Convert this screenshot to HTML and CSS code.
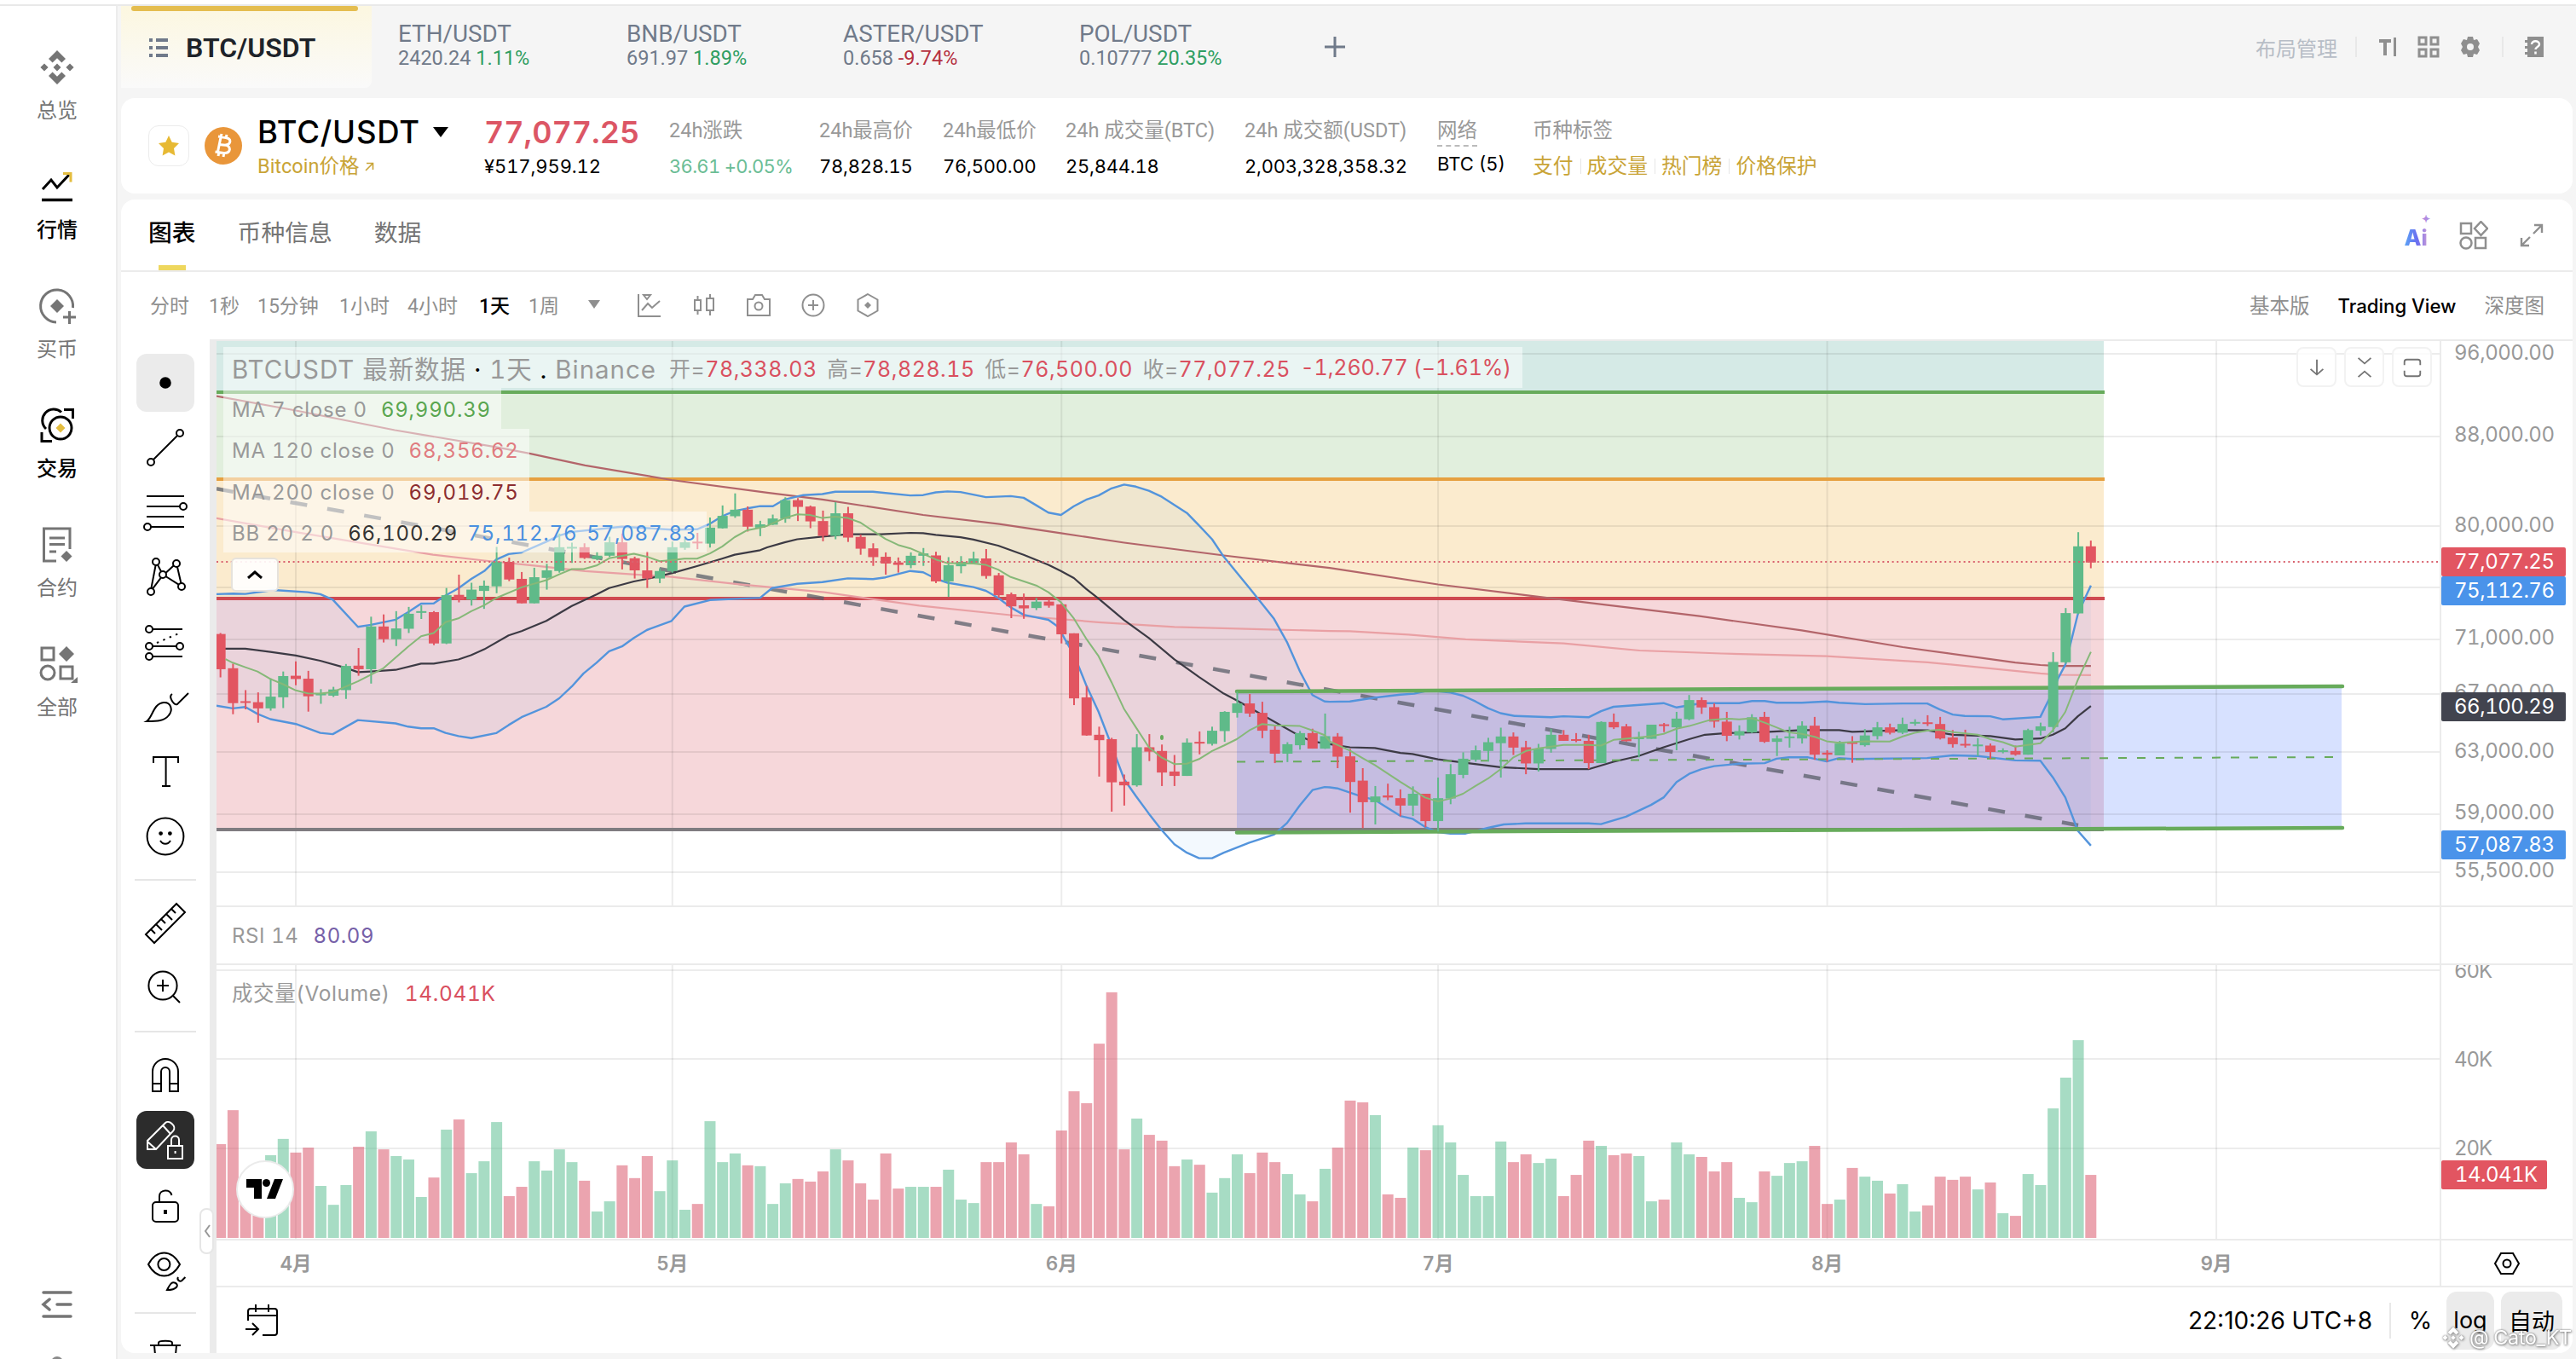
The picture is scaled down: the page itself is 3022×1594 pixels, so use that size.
FILE: index.html
```html
<!DOCTYPE html>
<html lang="zh-CN">

<head>
    <title>BTC/USDT</title>
    <meta charset="utf-8">
    <meta name="viewport" content="width=device-width, initial-scale=1">
    <link rel="stylesheet" href="styles.css">
</head>

<body>
    <nav class="sidebar">
        <a class="nav-item">
            <svg viewBox="0 0 44 44" fill="#757575"><path d="M22 2l10 10-4.6 4.6L22 11.200l-5.400 5.400L12 12zM22 42l10-10-4.600-4.600L22 32.800l-5.400-5.400L12 32zM22 17.500l4.500 4.500-4.500 4.500-4.500-4.500zM7 17.400l4.600 4.600L7 26.600 2.400 22zM37 17.400l4.600 4.600-4.600 4.600-4.600-4.600z"/></svg>
            <span>总览</span>
        </a>
        <a class="nav-item dark">
            <svg viewBox="0 0 44 44" fill="none" stroke="#000" stroke-width="3"><path d="M5 25l10-11 7 9L36 8"/><path d="M29 6.500h9v10" stroke="#e4bd3f"/><path d="M4 37.500h36" stroke-width="3.500"/></svg>
            <span>行情</span>
        </a>
        <a class="nav-item">
            <svg viewBox="0 0 44 44" fill="none" stroke="#757575" stroke-width="3"><path d="M21 41A19 19 0 1 1 40.500 24M29 35h15M36.500 28v15"/><path d="M22 14l8 8-8 8-8-8z" fill="#757575" stroke="none"/></svg>
            <span>买币</span>
        </a>
        <a class="nav-item dark">
            <svg viewBox="0 0 44 44" fill="none" stroke="#000" stroke-width="3"><circle cx="26" cy="25" r="13"/><path d="M9 26A13 13 0 0 1 27 6.500M30 3.500h10.500V14M4 30v10.500h12"/><path d="M26 19.500l5.500 5.500-5.500 5.500-5.500-5.500z" fill="#e4bd3f" stroke="none"/></svg>
            <span>交易</span>
        </a>
        <a class="nav-item">
            <svg viewBox="0 0 44 44" fill="none" stroke="#757575" stroke-width="3"><path d="M21 41H6.500V3H37v24M13 14h18M13 21.500h18M13 30h8"/><path d="M33 29l6.500 6.500-6.500 6.500-6.500-6.500z" fill="#757575" stroke="none"/></svg>
            <span>合约</span>
        </a>
        <a class="nav-item">
            <svg viewBox="0 0 44 44" fill="none" stroke="#757575" stroke-width="3"><path d="M4 3h14v14H4zM26 25h14v14H26z"/><circle cx="11" cy="32" r="8"/><path d="M33 1l9 9-9 9-9-9zM46 37v7h-8z" fill="#757575" stroke="none"/></svg>
            <span>全部</span>
        </a>
        <div class="nav-bottom">
            <svg width="40" height="40" viewBox="0 0 40 40" fill="none" stroke="#757575" stroke-width="3.500" stroke-linecap="round"><path d="M4 6h32M20 20h16M4 34h32M11 14l-7 6 7 6"/></svg>
            <i></i>
        </div>
    </nav>

    <main class="main">
        <header class="tabs">
            <div class="tab active">
                <svg width="24" height="24" viewBox="0 0 24 24" fill="#707a8a"><path d="M1 1h4v4H1zM9 1h14v4H9zM1 10h4v4H1zM9 10h14v4H9zM1 19h4v4H1zM9 19h14v4H9z"/></svg>
                BTC/USDT
            </div>
            <div class="tab eth"><b>ETH/USDT</b><span>2420.24 <em class="up">1.11%</em></span></div>
            <div class="tab bnb"><b>BNB/USDT</b><span>691.97 <em class="up">1.89%</em></span></div>
            <div class="tab aster"><b>ASTER/USDT</b><span>0.658 <em class="down">-9.74%</em></span></div>
            <div class="tab pol"><b>POL/USDT</b><span>0.10777 <em class="up">20.35%</em></span></div>
            <svg class="add" width="24" height="24" viewBox="0 0 24 24" stroke="#707a8a" stroke-width="3"><path d="M12 0v24M0 12h24"/></svg>
            <div class="tab-tools">
                <span>布局管理</span>
                <i class="vline"></i>
                <svg class="t-text" width="24" height="24" viewBox="0 0 24 24" fill="#8f8f8f"><path d="M1 3h14v4h-5v15H6V7H1zM18 1h3v22h-3z"/></svg>
                <svg class="t-grid" width="26" height="26" viewBox="0 0 26 26" fill="none" stroke="#8f8f8f" stroke-width="3"><path d="M2 2h8v8H2zM16 2h8v8h-8zM2 16h8v8H2zM16 16h8v8h-8z"/></svg>
                <svg class="t-gear" width="24" height="24" viewBox="0 0 24 24"><path d="M9 0h6l1 4 4-1 3 5-2 4 2 4-3 5-4-1-1 4H9l-1-4-4 1-3-5 2-4-2-4 3-5 4 1z" fill="#8f8f8f"/><circle cx="12" cy="12" r="4" fill="#f5f5f5"/></svg>
                <i class="vline"></i>
                <svg class="t-help" width="24" height="24" viewBox="0 0 24 24"><path d="M4 0h19v24H4v-3H1v-3h3v-4H1v-3h3V7H1V4h3z" fill="#8f8f8f"/><path d="M9 9c0-5 9-5 9 0 0 3-4.500 3-4.500 6M13.500 17.500v3" fill="none" stroke="#fff" stroke-width="2.500"/></svg>
            </div>
        </header>

        <section class="card ticker">
            <div class="fav"><svg width="28" height="28" viewBox="0 0 28 28"><path d="M14 2l3.700 7.800 8.300 1.200-6 6 1.400 8.500L14 21.500l-7.400 4L8 17l-6-6 8.300-1.200z" fill="#e7b933"/></svg></div>
            <svg class="coin" width="44" height="44" viewBox="0 0 44 44"><circle cx="22" cy="22" r="22" fill="#e9963a"/><path d="M16 11l9 1.500c7 1.500 6 8-.5 8.500 7 1.500 6.500 10-2 9.500L12.500 29M19 12l-3.500 17M16.500 20.500l8 .8M20 8l-1 4M26 9l-1 4M17 29l-1 5M23 30l-1 5" fill="none" stroke="#fff" stroke-width="3"/></svg>
            <div class="pair">
                <h1>BTC/USDT <svg width="20" height="14" viewBox="0 0 20 14"><path d="M1 1h18L10 13z"/></svg></h1>
                <a>Bitcoin价格 <svg width="11" height="11" viewBox="0 0 11 11" fill="none" stroke="#c9a437" stroke-width="1.600"><path d="M2 1.500h7.500V9M9.500 1.500L1 10"/></svg></a>
            </div>
            <div class="last"><strong>77,077.25</strong><span>¥517,959.12</span></div>
            <dl class="stat s1"><dt>24h涨跌</dt><dd class="soft-up">36.61 +0.05%</dd></dl>
            <dl class="stat s2"><dt>24h最高价</dt><dd>78,828.15</dd></dl>
            <dl class="stat s3"><dt>24h最低价</dt><dd>76,500.00</dd></dl>
            <dl class="stat s4"><dt>24h 成交量(BTC)</dt><dd>25,844.18</dd></dl>
            <dl class="stat s5"><dt>24h 成交额(USDT)</dt><dd>2,003,328,358.32</dd></dl>
            <dl class="stat net"><dt><u>网络</u></dt><dd>BTC (5)</dd></dl>
            <dl class="stat tags"><dt>币种标签</dt><dd><a>支付</a><a>成交量</a><a>热门榜</a><a>价格保护</a></dd></dl>
        </section>

        <section class="card panel">
            <div class="panel-tabs">
                <a class="on">图表</a><a>币种信息</a><a>数据</a>
                <div class="panel-icons">
                    <div class="ai"><b>Ai</b><sup>✦</sup></div>
                    <svg width="34" height="34" viewBox="0 0 34 34" fill="none" stroke="#8f8f8f" stroke-width="2.500"><path d="M2 3h12v12H2zM19 20h12v12H19zM25.500 1l7.500 8-7.500 8-7.500-8z"/><circle cx="8" cy="26" r="6.500"/></svg>
                    <svg width="28" height="28" viewBox="0 0 28 28" fill="none" stroke="#8f8f8f" stroke-width="2.400"><path d="M17 2h9v9M26 2L16 12M2 17v9h9M2 26l10-10"/></svg>
                </div>
            </div>

            <div class="intervals">
                <a class="i1">分时</a><a class="i2">1秒</a><a class="i3">15分钟</a><a class="i4">1小时</a><a class="i5">4小时</a><a class="i6 on">1天</a><a class="i7">1周</a>
                <svg class="caret" width="14" height="10" viewBox="0 0 14 10"><path d="M0 0h14L7 10z" fill="#8f8f8f"/></svg>
                <div class="tool-icons">
                    <svg viewBox="0 0 28 28"><path d="M1 1v26h26M5 20l7-8 5 5 9-8M7 2h8l-4 5z"/></svg>
                    <svg viewBox="0 0 28 28"><path d="M3 8h7v12H3zM6.500 3v5M6.500 20v5M17 6h8v14h-8zM21 1v5M21 20v6"/></svg>
                    <svg viewBox="0 0 28 28"><path d="M1 7h6l3-5h8l3 5h6v19H1z"/><circle cx="14" cy="15" r="4.500"/></svg>
                    <svg viewBox="0 0 28 28"><circle cx="14" cy="14" r="12.500"/><path d="M14 8v12M8 14h12"/></svg>
                    <svg viewBox="0 0 28 28"><path d="M14 1l11.500 6.500v13L14 27 2.500 20.500v-13z"/><path d="M14 10l4 4-4 4-4-4z" fill="#8f8f8f" stroke="none"/></svg>
                </div>
                <div class="views"><a>基本版</a><a class="on">Trading View</a><a>深度图</a></div>
            </div>

            <div class="workspace">
                <div class="drawbar">
                    <button class="sel"><svg viewBox="0 0 28 28"><circle cx="14" cy="14" r="2.900" fill="#000"/></svg></button>
                    <button><svg viewBox="0 0 28 28"><path d="M7 21L21 7"/><circle cx="5.500" cy="22.500" r="2"/><circle cx="22.500" cy="5.500" r="2"/></svg></button>
                    <button><svg viewBox="0 0 28 28"><path d="M3 4.500h22M3 10.500h19.500M3 16.500h22M5.500 22.500H25"/><circle cx="24.500" cy="10.500" r="2"/><circle cx="3.500" cy="22.500" r="2"/></svg></button>
                    <button><svg viewBox="0 0 28 28"><path d="M8.300 7L5.700 20.500M9.500 6.800l2 3.800M14.200 11.500L18.800 7.300M21 8l2.200 9.500M11.500 14.200l-5 6.600M14.200 13.500l7.600 4.800"/><circle cx="8.500" cy="5" r="2"/><circle cx="20.500" cy="6" r="2"/><circle cx="12.500" cy="12.500" r="2"/><circle cx="5.500" cy="22.500" r="2"/><circle cx="23.500" cy="19.500" r="2"/></svg></button>
                    <button><svg viewBox="0 0 28 28"><path d="M6.500 6.500H24M6.500 16.500h14M6.500 22.500H24"/><path d="M9 14.500l14-6" stroke-dasharray="1.200 2.800"/><circle cx="4.500" cy="6.500" r="2"/><circle cx="4.500" cy="16.500" r="2"/><circle cx="22.500" cy="16.500" r="2"/><circle cx="4.500" cy="22.500" r="2"/></svg></button>
                    <button><svg viewBox="0 0 28 28"><path d="M3 22.500c3.500-2 3.800-10.500 10-11 4.500-.200 5.500 4.500 3 7.500-2.600 3.300-6.500 3.500-13 3.500zM18 6.500c-2.500 1.500 1 6.800 3 6L27.500 6"/></svg></button>
                    <button><svg viewBox="0 0 28 28"><path d="M7 9V5.500h14.500V9M14.300 5.500v17M12 22.500h5"/></svg></button>
                    <button><svg viewBox="0 0 28 28"><circle cx="14" cy="14" r="10.700"/><path d="M11 16.500c1.500 2.500 4.500 2.500 6 0"/><circle cx="11.300" cy="12.300" r=".7" fill="#000"/><circle cx="16.700" cy="12.300" r=".7" fill="#000"/></svg></button>
                    <hr>
                    <button><svg viewBox="0 0 28 28"><path d="M2.500 20.500L20.500 2.500l5 5L7.500 25.500zM5.500 17.500l2.500 2.500M8.500 14.500L12 18M11.500 11.500L14 14M14.500 8.500L18 12M17.500 5.500L20 8"/></svg></button>
                    <button><svg viewBox="0 0 28 28"><circle cx="12.500" cy="12.500" r="8.300"/><path d="M9 12.500h7M12.500 9v7M18.500 18.500l4 4"/></svg></button>
                    <hr>
                    <button><svg viewBox="0 0 28 28"><path d="M6.500 23.500V12a7.500 7.500 0 0 1 15 0v11.500h-5V12a2.500 2.500 0 0 0-5 0v11.500zM6.500 19h5M16.500 19h5"/></svg></button>
                    <button class="locked"><svg viewBox="0 0 28 28"><path d="M3.500 19.500v-5L14 4c2-2 7 2 4.500 4.800L8.500 19.500zM12.500 5.500l4.500 5M3.500 15l5 4.500M15.500 17.500H24V25h-8.500zM17.500 17.500V14c0-3 4.500-3 4.500 0v3.500M19.800 20.500V22"/></svg></button>
                    <button><svg viewBox="0 0 28 28"><rect x="6.500" y="12.500" width="15" height="11.500" rx="2"/><path d="M10.500 12.500V9c0-4 6.500-4.500 7.200-.5"/><path d="M14 17v2.500" stroke-width="2"/></svg></button>
                    <button><svg viewBox="0 0 28 28"><path d="M4 11c5-9 13.500-9 18.500 0-5 9-13.500 9-18.500 0z"/><circle cx="13.200" cy="11" r="3.500"/><path d="M15 26c2-4 3-5 5-4s1 4-5 4zM21.500 18.500c-1 1.500 1 3 2.200 2l2-2"/></svg></button>
                    <hr>
                    <button><svg viewBox="0 0 28 28"><path d="M5 7.500h18M10 7.500V6c0-1.500 8-1.500 8 0v1.500M7.500 7.500L9 24h10l1.500-16.500"/></svg></button>
                    <div class="handle"><svg width="8" height="16" viewBox="0 0 8 16" fill="none" stroke="#999" stroke-width="2"><path d="M7 1L2 8l5 7"/></svg></div>
                </div>

                <div class="chart">
                    <svg id="plot" viewBox="254 398 2764 1112" width="2764" height="1112"></svg>

                    <div class="legend">
                        <div class="row title"><span>BTCUSDT 最新数据 <i>·</i> 1天 <i>.</i> Binance</span><small>开=<em>78,338.03</em></small><small>高=<em>78,828.15</em></small><small>低=<em>76,500.00</em></small><small>收=<em>77,077.25</em></small><small><em>-1,260.77 (−1.61%)</em></small></div>
                        <div class="row">MA 7 close 0<em class="ma7">69,990.39</em></div>
                        <div class="row">MA 120 close 0<em class="ma120">68,356.62</em></div>
                        <div class="row">MA 200 close 0<em class="ma200">69,019.75</em></div>
                        <div class="row">BB 20 2 0<em class="mid">66,100.29</em><em class="band">75,112.76</em><em class="band">57,087.83</em></div>
                        <button class="fold"><svg width="18" height="10" viewBox="0 0 18 10" fill="none" stroke="#000" stroke-width="3"><path d="M1 9l8-7 8 7"/></svg></button>
                    </div>
                    <div class="pane-label rsi">RSI 14<em>80.09</em></div>
                    <div class="pane-label vol">成交量(Volume)<em>14.041K</em></div>

                    <div class="pane-buttons">
                        <button><svg viewBox="0 0 28 28"><path d="M14 4v19M6 16l8 7 8-7"/></svg></button>
                        <button><svg viewBox="0 0 28 28"><path d="M6 2l8 7 8-7M6 26l8-7 8 7"/></svg></button>
                        <button><svg viewBox="0 0 28 28"><path d="M4 11V7c0-2 1-3 3-3h14c2 0 3 1 3 3v4M4 18v4c0 2 1 3 3 3h14c2 0 3-1 3-3v-4"/></svg></button>
                    </div>
                    <div class="tv"><svg width="44" height="24" viewBox="0 0 44 24"><path d="M0 0h18v23H9V10H0zM33 0h10L34 23H24z"/><circle cx="23.500" cy="4.500" r="4.500"/></svg></div>

                    <footer class="bottombar">
                        <svg width="40" height="38" viewBox="0 0 40 38" fill="none" stroke="#000" stroke-width="2"><path d="M4 19V8c0-2 1-3 3-3h28c2 0 3 1 3 3v25c0 2-1 3-3 3H21M4 13h34M13 0v9M28 0v9M1 29h15M9 22l7 7-7 7"/></svg>
                        <time>22:10:26 UTC+8</time>
                        <i class="vline"></i>
                        <span class="pct">%</span>
                        <button>log</button>
                        <button>自动</button>
                    </footer>
                </div>
            </div>
        </section>
    </main>

    <div class="watermark">
        <svg width="28" height="28" viewBox="0 0 44 44" fill="#fff"><path d="M22 2l10 10-4.600 4.600L22 11.200l-5.400 5.400L12 12zM22 42l10-10-4.600-4.600L22 32.800l-5.400-5.400L12 32zM22 17.500l4.500 4.500-4.500 4.500-4.500-4.500zM7 17.400l4.600 4.600L7 26.600 2.400 22zM37 17.400l4.600 4.600-4.600 4.600-4.600-4.600z"/></svg>
        @ Cato_KT
    </div>

    <script src="chart.js"></script>
</body>

</html>
```

FILE: styles.css
```css
* {
    box-sizing: border-box;
}

body {
    margin: 0;
    height: 1594px;
    display: flex;
    overflow: hidden;
    background: #f5f5f5;
    border-top: 5px solid #fff;
    font-family: Inter, "Noto Sans CJK SC", sans-serif;
    font-variant-numeric: tabular-nums;
    color: #000;
}

h1, dl, dt, dd, hr {
    margin: 0;
}

em, i {
    font-style: normal;
}

button {
    border: none;
    background: none;
    padding: 0;
    font-family: inherit;
}

svg {
    display: block;
    flex: none;
}

/* left navigation */
.sidebar {
    width: 138px;
    flex: none;
    background: #fff;
    border-top: 2px solid #e9e9e9;
    border-right: 2px solid #ececec;
    padding-top: 50px;
    display: flex;
    flex-direction: column;
}

.nav-item {
    height: 140px;
    flex: none;
    display: flex;
    flex-direction: column;
    align-items: center;
    gap: 13px;
    padding-right: 2px;
    font-size: 24px;
    line-height: 32px;
    color: #757575;
}

.nav-item svg {
    width: 44px;
    height: 44px;
    overflow: visible;
}

.nav-item.dark {
    color: #000;
    font-weight: 500;
}

.nav-bottom {
    margin-top: 613px;
    display: flex;
    flex-direction: column;
    align-items: center;
    padding-right: 2px;
    gap: 41px;
}

.nav-bottom i {
    width: 14px;
    height: 14px;
    border-radius: 50%;
    background: #8a8a8a;
}

/* pair tabs */
.main {
    flex: 1;
    min-width: 0;
    border-top: 2px solid #e9e9e9;
    padding: 0 4px 0 4px;
    display: flex;
    flex-direction: column;
}

.tabs {
    height: 108px;
    display: flex;
    align-items: flex-start;
    font-family: Roboto, "Noto Sans CJK SC", sans-serif;
}

.tab {
    display: flex;
    flex-direction: column;
    color: #707a8a;
    font-size: 24px;
    padding-top: 16px;
    white-space: nowrap;
}

.tab b {
    font-size: 27.800px;
    line-height: 34px;
    font-weight: 400;
}

.tab span {
    font-size: 23.500px;
    line-height: 22px;
}

.tab.active {
    width: 294px;
    height: 96px;
    padding: 1px 0 0 32px;
    flex-direction: row;
    align-items: center;
    gap: 20px;
    color: #1e2329;
    font-size: 32px;
    font-weight: 600;
    background: linear-gradient(#fcf7e0, #fafafa);
    border-radius: 0 0 8px 0;
    position: relative;
}

.tab.active::before {
    content: "";
    position: absolute;
    top: 0;
    left: 12px;
    width: 266px;
    height: 6px;
    border-radius: 3px;
    background: #e4bd4f;
}

.eth {
    width: 268px;
    margin-left: 31px;
}

.bnb {
    width: 254px;
}

.aster {
    width: 277px;
}

.pol {
    width: 288px;
}

.up {
    color: #2f9e62;
}

.down {
    color: #b5303f;
}

.add {
    margin-top: 36px;
}

.tab-tools {
    margin-left: auto;
    height: 96px;
    display: flex;
    align-items: center;
    color: #b7bdc6;
    font-size: 24px;
    padding-right: 33px;
}

.vline {
    width: 2px;
    height: 42px;
    background: #e8e8e8;
}

.tab-tools .vline {
    height: 24px;
    margin-left: 21px;
}

.t-text {
    margin-left: 25px;
}

.t-grid {
    margin-left: 22px;
}

.t-gear {
    margin-left: 24px;
}

.tab-tools .t-gear + .vline {
    margin-left: 25px;
}

.t-help {
    margin-left: 24px;
}

/* ticker card */
.card {
    background: #fff;
    border-radius: 16px;
}

.ticker {
    height: 112px;
    flex: none;
    display: flex;
    padding-left: 32px;
}

.fav {
    width: 48px;
    height: 48px;
    margin-top: 32px;
    border: 1px solid #ececec;
    border-radius: 12px;
    display: flex;
    align-items: center;
    justify-content: center;
}

.coin {
    margin: 34px 0 0 18px;
}

.pair {
    width: 266px;
    margin-left: 18px;
    padding-top: 18px;
}

.pair h1 {
    font-size: 36.500px;
    line-height: 44px;
    font-weight: 500;
    letter-spacing: .8px;
    display: flex;
    align-items: center;
    gap: 14px;
}

.pair a {
    display: flex;
    align-items: center;
    gap: 7px;
    font-family: Roboto, "Noto Sans CJK SC", sans-serif;
    font-size: 23.500px;
    line-height: 36px;
    color: #c9a437;
}

.last {
    width: 217px;
    padding-top: 18px;
    display: flex;
    flex-direction: column;
    font-size: 22px;
    line-height: 36px;
}

.last span {
    letter-spacing: -.1px;
}

.last strong {
    font-size: 36px;
    line-height: 44px;
    font-weight: 600;
    color: #dc5665;
}

.stat {
    flex: none;
    padding-top: 20px;
    white-space: nowrap;
}

.stat dt {
    font-family: Roboto, "Noto Sans CJK SC", sans-serif;
    font-size: 23.500px;
    line-height: 36px;
    color: #999;
}

.stat dd {
    font-size: 22px;
    line-height: 48px;
    letter-spacing: -.25px;
}

.s1 {
    width: 176px;
}

.s2 {
    width: 145px;
}

.s3 {
    width: 144px;
}

.s4 {
    width: 210px;
}

.s5 {
    width: 226px;
}

.net {
    width: 112px;
}

.net u {
    text-decoration: none;
    display: inline-block;
    height: 37px;
    border-bottom: 2px dashed #bbb;
}

.net dt {
    height: 36px;
}

.net dd {
    line-height: 42px;
    letter-spacing: 0;
}

.stat .soft-up {
    color: #6bbd95;
    letter-spacing: -.7px;
}

.tags dd {
    display: flex;
    color: #c9a437;
    font-size: 23.800px;
    letter-spacing: 0;
}

.tags a + a {
    margin-left: 8px;
    padding-left: 8px;
    background: linear-gradient(#e6e6e6, #e6e6e6) 0 50% / 1px 18px no-repeat;
}

/* chart panel */
.panel {
    margin-top: 7px;
    height: 1353px;
    flex: none;
    display: flex;
    flex-direction: column;
    overflow: hidden;
}

.panel-tabs {
    height: 85px;
    flex: none;
    border-bottom: 2px solid #ebebeb;
    padding-left: 32px;
    display: flex;
    gap: 49px;
    font-size: 27.800px;
    line-height: 78px;
    color: #757575;
}

.panel-tabs .on {
    color: #000;
    font-weight: 500;
    background: linear-gradient(#eed75e, #eed75e) 50% 100% / 32px 6px no-repeat;
}

.panel-icons {
    margin-left: auto;
    height: 83px;
    display: flex;
    align-items: center;
    gap: 37px;
    padding-right: 34px;
}

.ai {
    font: 800 26px/40px Inter, sans-serif;
    position: relative;
    padding-top: 6px;
}

.ai b {
    font-weight: 800;
    color: transparent;
    background: linear-gradient(90deg, #5ba4f5, #6a6df0 55%, #c99bd8);
    -webkit-background-clip: text;
    background-clip: text;
}

.ai sup {
    position: absolute;
    top: -6px;
    right: -3px;
    font-size: 12px;
    line-height: 20px;
    color: #b18be0;
}

.intervals {
    height: 79px;
    flex: none;
    display: flex;
    align-items: center;
    padding: 0 33px 4px 34px;
    font-size: 23px;
    font-family: Roboto, "Noto Sans CJK SC", sans-serif;
    color: #8f8f8f;
}

.intervals .on {
    color: #000;
    font-weight: 500;
}

.i1 {
    width: 69px;
}

.i2 {
    width: 57px;
}

.i3 {
    width: 96px;
}

.i4 {
    width: 80px;
}

.i5 {
    width: 84px;
}

.i6 {
    width: 58px;
}

.i7 {
    width: 70px;
}

.tool-icons {
    display: flex;
    gap: 36px;
    margin: 2px 0 0 44px;
}

.tool-icons svg {
    width: 28px;
    height: 28px;
    fill: none;
    stroke: #8f8f8f;
    stroke-width: 2;
}

.views {
    margin-left: auto;
    display: flex;
    align-items: baseline;
    gap: 33px;
    font-size: 23.500px;
}

.views .on {
    font-family: Inter, sans-serif;
    font-size: 22.200px;
}

.workspace {
    flex: 1;
    display: flex;
    min-height: 0;
}

/* drawing tools */
.drawbar {
    width: 112px;
    flex: none;
    border-right: 8px solid #ebebeb;
    padding-top: 17px;
    display: flex;
    flex-direction: column;
    align-items: center;
    gap: 8px;
    position: relative;
}

.drawbar button {
    width: 68px;
    height: 68px;
    flex: none;
    border-radius: 12px;
    display: flex;
    align-items: center;
    justify-content: center;
}

.drawbar svg {
    width: 56px;
    height: 56px;
    fill: none;
    stroke: #000;
    stroke-width: 1;
}

.drawbar .sel {
    background: #ebebeb;
}

.drawbar .locked {
    background: #2c2c2c;
}

.drawbar .locked svg {
    stroke: #fff;
}

.drawbar hr {
    width: 72px;
    height: 2px;
    flex: none;
    border: none;
    background: #e6e6e6;
    margin: 8px 0;
}

.drawbar .handle {
    position: absolute;
    left: 92px;
    top: 1019px;
    width: 17px;
    height: 54px;
    border: 2px solid #e6e6e6;
    border-radius: 8px;
    background: #fff;
    display: flex;
    align-items: center;
    justify-content: center;
}

.drawbar .handle svg {
    width: 8px;
    height: 16px;
    stroke: #999;
    stroke-width: 2;
}

/* chart */
.chart {
    flex: 1;
    position: relative;
    display: flex;
    flex-direction: column;
}

#plot text {
    font-size: 24px;
    fill: #999;
}

#plot .tag {
    fill: #fff;
}

#plot .month {
    font-size: 22.500px;
    font-weight: 600;
    text-anchor: middle;
}

.legend {
    position: absolute;
    left: 8px;
    top: 9px;
    display: flex;
    flex-direction: column;
    align-items: flex-start;
    color: #999;
}

.row {
    height: 48.200px;
    padding: 3px 12px 0 10px;
    background: rgba(255, 255, 255, .5);
    display: flex;
    align-items: center;
    font-size: 24px;
    letter-spacing: .8px;
    white-space: nowrap;
}

.row.title {
    font-size: 29.500px;
    letter-spacing: .95px;
    padding: 0 13px 0 10px;
}

.title i {
    color: #000;
}

.title span {
    width: 513px;
}

.title small {
    font-size: 25px;
    letter-spacing: .5px;
    margin-right: 11.500px;
}

.title small:last-child {
    margin-right: 0;
    letter-spacing: -.1px;
}

.title em {
    color: #d9505f;
}

.row > em {
    margin-left: 16px;
}

.row .band {
    margin-left: 11px;
}

.ma7 {
    color: #5aa650;
}

.ma120 {
    color: #e07c80;
}

.ma200 {
    color: #8c2d30;
}

.mid {
    color: #333;
}

.band {
    color: #4a90e0;
}

.fold {
    width: 56px;
    height: 40px;
    margin: 6px 0 0 9px;
    border: 2px solid #e6e2dc;
    border-radius: 6px;
    background: rgba(255, 255, 255, .9);
    display: flex;
    align-items: center;
    justify-content: center;
}

.pane-label {
    position: absolute;
    left: 18px;
    font-size: 24px;
    line-height: 32px;
    letter-spacing: .6px;
    color: #999;
}

.pane-label em {
    margin-left: 17px;
}

.rsi {
    top: 684px;
}

.rsi em {
    color: #7660a8;
}

.vol {
    top: 751px;
    font-size: 24.500px;
}

.vol em {
    color: #d9505f;
}

.pane-buttons {
    position: absolute;
    left: 2440px;
    top: 9px;
    display: flex;
    gap: 9px;
}

.pane-buttons button {
    width: 47px;
    height: 47px;
    border: 2px solid #f2f2f2;
    border-radius: 8px;
    background: rgba(255, 255, 255, .8);
    display: flex;
    align-items: center;
    justify-content: center;
}

.pane-buttons svg {
    width: 26px;
    height: 26px;
    fill: none;
    stroke: #757575;
    stroke-width: 2;
}

.tv {
    position: absolute;
    left: 23px;
    top: 963px;
    width: 68px;
    height: 68px;
    border: 2px solid #ebebeb;
    border-radius: 50%;
    background: #fff;
    display: flex;
    align-items: center;
    justify-content: center;
}

.bottombar {
    height: 77px;
    display: flex;
    align-items: center;
    padding: 0 12px 0 33px;
    font-size: 28px;
}

.bottombar time {
    margin-left: auto;
    font-variant-numeric: normal;
}

.bottombar .vline {
    margin-left: 20px;
}

.pct {
    width: 65px;
    padding-left: 4px;
    text-align: center;
}

.bottombar button {
    width: 56px;
    height: 68px;
    border-radius: 12px;
    background: #ebebeb;
    font-size: 27px;
}

.bottombar button:last-child {
    width: 72px;
    margin-left: 8px;
}

.watermark {
    position: absolute;
    left: 2864px;
    top: 1554px;
    display: flex;
    align-items: center;
    gap: 5px;
    font-size: 23.500px;
    line-height: 30px;
    letter-spacing: -.4px;
    color: #fff;
    white-space: nowrap;
    filter: drop-shadow(0 0 1px #777) drop-shadow(1px 1px 1px #aaa);
}
```

FILE: chart.js
```js
const RED = '#e25561', GREEN = '#5fba89';
const out = [];
const dayX = d => 347 + d * 14.726;   // day 0 is April 1

function line(x1, y1, x2, y2, color, width, extra = '') {
    out.push(`<line x1="${x1}" y1="${y1}" x2="${x2}" y2="${y2}" stroke="${color}" stroke-width="${width}" ${extra}/>`);
}
function rect(x, y, w, h, fill, extra = '') {
    out.push(`<rect x="${x}" y="${y}" width="${w}" height="${h}" fill="${fill}" ${extra}/>`);
}
function text(x, y, str, extra = '') {
    out.push(`<text x="${x}" y="${y}" ${extra}>${str}</text>`);
}

// candles: color, high, body top, body bottom, low
const spring = `
R 895 898 1006 1031,R 989 1003 1110 1144,R 1070 1104 1109 1129,R 1077 1107 1126 1170,G 1034 1090 1126 1133,G 1013 1027 1092 1125,
R 982 1026 1036 1055,R 1011 1035 1089 1136,G 1067 1080 1086 1112,G 1060 1068 1087 1091,G 990 996 1070 1097,R 941 995 1006 1026,
G 845 875 1006 1050,R 838 875 914 924,G 828 881 914 935,G 815 836 882 895,G 810 828 833 852,R 828 831 927 932,G 757 779 927 929,
R 716 778 793 801,G 741 762 793 811,G 734 750 766 821,G 631 677 752 773,R 664 677 731 736,R 708 729 804 804,G 695 724 804 804,
G 683 703 726 762,G 590 632 705 710,G 618 631 635 680,R 620 632 665 668,G 647 658 668 672,G 600 617 658 662,R 590 617 668 700,
R 661 666 703 728,R 645 703 728 757,G 697 705 728 742,G 615 632 705 710,G 605 617 634 640,R 588 615 619 638,G 541 572 621 633,
G 504 536 574 575,G 467 517 537 542,R 507 517 569 584,G 551 562 572 598,G 532 544 563 564,G 479 488 545 557`;
const summer = `
R 466 472 492 534,R 488 491 535 555,R 503 534 578 594,G 478 511 578 588,R 492 511 583 596,R 574 581 616 634,R 600 615 641 667,
R 627 640 660 693,R 642 657 664 687,G 627 637 665 674,G 614 630 637 667,R 625 636 713 718,G 641 665 713 759,G 638 655 668 689,
G 625 645 659 659,R 617 645 697 705,R 688 695 754 762,R 746 751 787 822,R 749 784 793 824,G 762 773 792 798,R 768 773 785 791,
R 778 781 870 897,R 867 867 1060 1080,R 1023 1057 1170 1171,R 1144 1168 1184 1292,R 1177 1181 1309 1396,R 1286 1307 1318 1378,
G 1166 1205 1318 1322,R 1166 1205 1218 1246,R 1197 1216 1280 1320,R 1228 1277 1290 1320,G 1179 1191 1290 1290,R 1158 1189 1194 1226,
G 1144 1156 1195 1200,G 1098 1100 1157 1189,G 1040 1075 1103 1117,R 1047 1075 1105 1115,R 1070 1103 1156 1178,R 1142 1153 1224 1252,
G 1190 1196 1224 1249,G 1157 1163 1199 1212,R 1150 1163 1209 1209,G 1105 1172 1209 1210,R 1163 1173 1233 1267,R 1210 1232 1308 1399,
R 1267 1304 1368 1445,G 1320 1351 1368 1434,R 1313 1348 1354 1362,R 1330 1356 1378 1410,G 1321 1343 1378 1409,R 1343 1343 1424 1442,
G 1295 1356 1424 1455,G 1255 1285 1357 1374,G 1220 1239 1287 1297,G 1200 1214 1242 1248,G 1177 1190 1216 1247,G 1147 1173 1193 1295,
R 1161 1173 1206 1228,R 1186 1205 1253 1285,G 1195 1209 1253 1277,G 1150 1168 1210 1221,R 1154 1168 1186 1186,R 1163 1181 1186 1190,
R 1168 1186 1252 1270,G 1128 1130 1252 1252,R 1105 1130 1146 1151,R 1136 1143 1187 1188,G 1159 1176 1180 1235,G 1138 1138 1180 1180,
R 1133 1137 1142 1160,G 1100 1120 1146 1214,G 1050 1065 1122 1125,R 1057 1065 1087 1106,R 1075 1086 1129 1147,R 1100 1129 1171 1187,
G 1140 1157 1170 1182,G 1107 1116 1161 1163,R 1100 1115 1189 1192,G 1170 1179 1189 1231,G 1144 1173 1178 1206,G 1128 1141 1179 1194,
R 1115 1141 1227 1242,R 1214 1221 1227 1248,G 1186 1194 1229 1229,R 1172 1190 1194 1251,G 1151 1170 1199 1203,G 1130 1146 1172 1182,
R 1135 1146 1162 1167,G 1117 1136 1162 1166,G 1122 1130 1134 1141,R 1110 1131 1136 1142,R 1115 1136 1179 1182,R 1154 1176 1196 1206,
R 1153 1195 1200 1206,G 1178 1197 1200 1231,R 1194 1200 1219 1239,G 1208 1214 1218 1223,R 1200 1216 1227 1230,G 1150 1154 1227 1227,
G 1132 1143 1156 1170,G 923 952 1145 1161,G 792 807 953 957,G 567 609 808 810,R 592 609 657 674`;

// volume bar tops, one per candle
const volume = [828,711,1000,950,866,810,857,840,972,1037,969,837,784,846,869,881,1010,943,778,743,928,887,752,1007,975,887,919,846,890,954,
    1060,1025,901,945,869,990,884,1054,1034,749,890,860,901,904,1034,963,948,957,922,846,884,963,1019,860,981,975,975,975,916,1019,
    1031,890,890,822,863,1034,1042,781,646,687,482,305,846,740,796,816,904,881,899,995,945,863,928,857,890,931,1001,1025,913,840,
    678,684,728,1001,1013,840,849,763,822,934,1007,1007,819,890,863,893,878,1007,934,816,834,866,860,869,1025,1019,822,863,872,922,
    890,1013,1028,922,937,893,887,834,1034,1019,910,940,954,998,966,1060,1039,940,951,940,984,960,1066,1075,931,969,705,599,470,934];
const volumeColors = 'RRRRGGRRGGGRGRGGGRGRGGGRRGGGGRGGRRRGGGRGGGRGGGRRRGRRRRRGGRGGGRRRRGRRRRRRRGRRRGRGGGRRRGGRGRRRGRRGRGGGGGGRRGGRRRGRRGGRGGRRRGGRGGGRRGRGGRGGRRRRGRGRGGGGGR';

// indicator points: [x origin, x scale, y scale, "x y ..."]
const seg = [[240, .44643, .38265], [900, .44643, .39541], [1560, .63776, .39541]];
const lines = {
    mid: ['31 943 107 943 173 953 240 964 304 980 371 1002 403 1015 437 1013 502 1008 569 989 602 989 667 976 700 963 735 945 799 902 833 889 898 858 965 812 1030 777 1063 757 1128 737 1162 729 1227 712 1294 690 1360 667 1393 655 1460 641',
        '0 612 46 597 79 588 145 580 212 573 300 573 376 569 410 570 443 575 508 582 542 589 607 607 674 634 739 664 772 682 806 703 838 735 871 764 938 828 1003 881 1070 944 1135 997 1200 1046 1234 1066 1301 1109 1400 1172 1433 1188',
        '0 1196 37 1205 83 1207 130 1222 152 1225 199 1241 245 1250 314 1264 384 1270 476 1270 522 1248 568 1231 614 1205 661 1181 690 1168 730 1163 800 1160 868 1154 937 1154 961 1159 1054 1154 1100 1155 1146 1168 1215 1172 1261 1182 1307 1179 1330 1168 1353 1149 1376 1113 1400 1083'],
    upper: ['31 776 75 774 107 775 180 763 271 770 304 776 337 793 403 876 437 870 502 854 535 831 569 805 602 804 633 780 667 758 701 729 735 705 766 670 799 653 833 648 898 615 932 596 965 585 1097 569 1227 578 1294 577 1328 560 1360 537 1393 521 1426 513 1460 506',
        '0 490 15 490 46 470 95 457 145 454 179 447 278 447 376 458 410 457 443 449 474 446 508 448 575 463 640 460 674 465 707 487 739 509 772 516 806 490 838 471 871 458 905 437 938 426 969 432 1003 444 1037 462 1103 510 1135 547 1169 588 1200 640 1267 732 1332 824 1366 893 1400 980 1433 1050 1465 1069',
        '0 1070 37 1069 83 1058 130 1049 155 1046 175 1039 199 1039 222 1043 245 1052 268 1069 291 1089 314 1104 340 1112 407 1116 430 1113 476 1116 499 1098 522 1085 614 1074 638 1087 684 1074 753 1074 777 1068 800 1068 822 1073 868 1073 914 1069 937 1073 985 1077 1054 1075 1099 1075 1122 1093 1146 1108 1168 1112 1215 1113 1238 1122 1307 1115 1330 1040 1340 1000 1353 960 1376 810 1390 760 1400 725'],
    lower: ['31 1118 74 1126 107 1122 139 1143 173 1159 240 1174 304 1201 337 1205 403 1162 502 1172 535 1182 569 1187 602 1187 633 1201 667 1211 701 1217 766 1202 799 1177 833 1153 898 1121 932 1095 965 1059 996 1019 1030 986 1063 951 1097 936 1128 910 1162 886 1227 858 1261 814 1328 794 1460 787',
        '13 733 79 720 145 715 212 704 278 706 311 701 376 682 410 686 443 705 474 717 542 730 575 741 607 762 640 790 674 812 739 827 764 847 790 900 806 930 838 1020 871 1100 905 1200 938 1300 969 1350 1003 1402 1037 1451 1070 1493 1103 1518 1135 1534 1169 1534 1200 1518 1267 1488 1332 1464 1366 1430 1400 1377 1433 1332 1465 1323',
        '0 1324 14 1327 60 1352 83 1361 106 1385 130 1409 152 1417 175 1441 199 1457 222 1461 250 1461 268 1454 291 1444 320 1434 360 1431 476 1431 499 1433 545 1411 591 1376 614 1354 638 1308 661 1284 684 1270 707 1261 753 1254 800 1252 822 1239 845 1235 880 1235 914 1247 937 1237 961 1240 1099 1237 1146 1229 1192 1231 1261 1244 1307 1245 1330 1294 1353 1354 1376 1453 1400 1497'],
    ma7: ['55 975 74 986 107 1000 139 1013 173 1036 206 1052 240 1071 271 1080 304 1081 338 1076 403 1043 470 1003 535 937 569 905 602 895 633 862 667 850 701 828 735 810 766 788 833 755 898 733 932 715 965 699 996 699 1030 688 1063 666 1128 652 1162 661 1196 675 1227 672 1261 667 1294 667 1328 651 1360 630 1393 601 1426 580 1460 572',
        '0 548 46 525 79 514 112 516 145 525 179 521 212 525 244 538 278 563 311 587 344 605 376 615 443 648 474 659 542 660 575 664 607 678 640 700 707 725 739 745 772 775 806 823 838 882 871 935 905 1012 938 1092 969 1146 1003 1205 1037 1236 1070 1255 1103 1254 1135 1240 1169 1216 1200 1200 1234 1181 1267 1155 1301 1136 1332 1140 1400 1142 1433 1155 1465 1169',
        '0 1188 37 1215 60 1237 83 1258 130 1308 152 1330 175 1354 199 1366 222 1357 245 1343 268 1320 291 1298 314 1270 337 1236 361 1216 384 1208 430 1198 476 1198 499 1200 522 1183 568 1176 591 1172 614 1165 638 1150 661 1142 700 1124 730 1120 753 1122 777 1119 800 1132 845 1161 868 1165 892 1174 914 1187 937 1192 985 1187 1030 1188 1054 1173 1076 1162 1099 1156 1122 1153 1146 1160 1192 1168 1215 1181 1238 1190 1261 1203 1307 1193 1330 1155 1353 1100 1376 1005 1400 922'],
    ma120: ['31 543 240 586 500 636 600 655 735 673 865 688 1000 705 1227 723 1400 745',
        '0 729 150 745 400 785 640 813 870 834 1070 848 1300 855',
        '0 860 37 861 145 871 250 885 430 897 570 918 720 927 914 935 1100 953 1307 986 1340 990 1400 991'],
    ma200: ['31 169 240 213 500 273 766 325 851 344 1000 381 1227 426',
        '0 450 145 470 410 516 610 543 772 570 938 598 1200 636 1400 663',
        '0 673 199 722 380 758 680 816 868 858 1054 908 1261 954 1307 961 1340 964 1400 964']
};

function points(name) {
    const pts = [];
    lines[name].forEach((str, s) => {
        const n = str.split(' ').map(Number);
        for (let i = 0; i < n.length; i += 2) {
            pts.push((seg[s][0] + n[i] * seg[s][1]).toFixed(1) + ',' + (400 + n[i + 1] * seg[s][2]).toFixed(1));
        }
    });
    return pts;
}
function polyline(name, color, width) {
    out.push(`<polyline points="${points(name).join(' ')}" fill="none" stroke="${color}" stroke-width="${width}" stroke-linejoin="round"/>`);
}

// zones
rect(254, 398, 2214, 62, '#d5eae6');
rect(254, 460, 2214, 102, '#e1efdd');
rect(254, 562, 2214, 140, '#fbebce');
rect(254, 702, 2214, 271, '#f6d7da');

// channel
out.push('<polygon points="1451,811 2747,805 2747,971 1451,977" fill="rgba(41,98,255,.19)"/>');
// bollinger fill
out.push(`<polygon points="${points('upper').concat(points('lower').reverse()).join(' ')}" fill="rgba(33,150,243,.055)"/>`);

// grid
const grid = 'rgba(0,0,0,.075)';
[415, 512, 617, 689, 750, 814, 882, 955, 1023, 1138, 1242, 1347].forEach(y => line(254, y, 2863, y, grid, 2));
[0, 30, 61, 91, 122, 153].forEach((d, i) => {
    line(dayX(d), 398, dayX(d), 1063, grid, 2);
    line(dayX(d), 1131, dayX(d), 1454, grid, 2);
    text(dayX(d), 1490, (i + 4) + '月', 'class="month"');
});

line(254, 973, 2468, 973, '#7f7c80', 4);
line(254, 460, 2469, 460, '#67ab5b', 4);
line(254, 562, 2469, 562, '#e6a040', 4);
line(254, 702, 2469, 702, '#cf4a50', 4);
line(254, 573.3, 2438, 968, 'rgba(90,95,105,.75)', 4.5, 'stroke-dasharray="20 24"');

polyline('ma200', '#b3656a', 2.2);
polyline('ma120', '#e9a0a4', 2.2);
polyline('mid', '#3c3a44', 2.2);
polyline('upper', '#5394dc', 2.4);
polyline('lower', '#5394dc', 2.4);

line(1451, 811, 2748, 805, '#67ab5b', 4.5, 'stroke-linecap="round"');
line(1451, 976.5, 2748, 971, '#67ab5b', 4.5, 'stroke-linecap="round"');
line(1451, 893.5, 2747, 888, '#67ab5b', 2, 'stroke-dasharray="10 12"');

function candles(str, start, k) {
    str.trim().split(/,\s*/).forEach((row, i) => {
        const [c, h, t, b, l] = row.split(' ');
        const color = c === 'R' ? RED : GREEN, x = dayX(start + i);
        line(x, 400 + h * k, x, 400 + l * k, color, 2);
        rect(x - 6, 400 + t * k, 12, Math.max(2, (b - t) * k), color);
    });
}
candles(spring, -6, .38265);
candles(summer, 40, .39541);
out.push('<ellipse cx="1363" cy="865" rx="2" ry="3" fill="#67ab5b"/>');
polyline('ma7', '#86b878', 2);

line(254, 659, 2863, 659, '#d9636f', 2, 'stroke-dasharray="2 3.6"');

volume.forEach((v, i) => {
    const y = 1060 + v * .34056;
    const x = Math.max(254, dayX(i - 6) - 6.5);
    rect(x, y, dayX(i - 6) + 6.5 - x, 1452 - y, volumeColors[i] === 'R' ? '#da5a6e' : '#5fbf94', 'opacity=".55"');
});

// price scale
line(254, 399, 3018, 399, '#ebebeb', 2);
line(2863, 398, 2863, 1510, '#ebebeb', 2);
[1063, 1131, 1454, 1509].forEach(y => line(254, y, 3018, y, '#ebebeb', 2));
[[414, '96,000.00'], [510, '88,000.00'], [616, '80,000.00'], [748, '71,000.00'], [812, '67,000.00'], [881, '63,000.00'],
    [953, '59,000.00'], [1021, '55,500.00']].forEach(([y, s]) => text(2879, y + 8, s, 'textLength="118"'));
[[642, '#e25561', '77,077.25'], [676, '#4a93ea', '75,112.76'], [812, '#42444f', '66,100.29'], [974, '#4a93ea', '57,087.83']].forEach(([y, c, s]) => {
    rect(2864, y, 146, 34, c, 'rx="2"');
    text(2879, y + 24.5, s, 'class="tag" textLength="118"');
});
out.push('<clipPath id="volclip"><rect x="2864" y="1132" width="150" height="30"/></clipPath>');
text(2879, 1147, '60K', 'clip-path="url(#volclip)" textLength="45"');
text(2879, 1251, '40K', 'textLength="45"');
text(2879, 1355, '20K', 'textLength="45"');
rect(2864, 1361, 124, 34, '#e25561', 'rx="2"');
text(2880, 1386, '14.041K', 'class="tag" textLength="97"');
out.push('<path d="M2927 1482l7-12h14l7 12-7 12h-14z" fill="none" stroke="#000" stroke-width="2"/><circle cx="2941" cy="1482" r="4.500" fill="none" stroke="#000" stroke-width="2"/>');

document.getElementById('plot').innerHTML = out.join('');
```
